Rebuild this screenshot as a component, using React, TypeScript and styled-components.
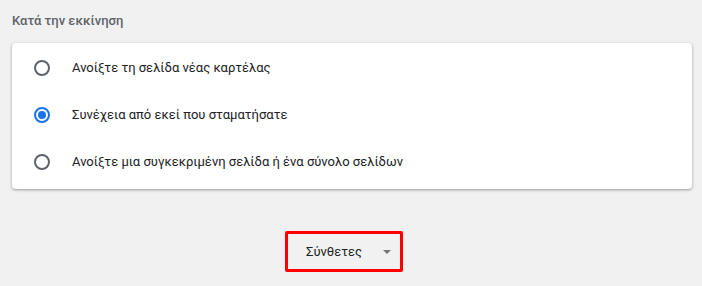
import styled, { createGlobalStyle } from "styled-components";
import { useState } from "react";

const GlobalStyle = createGlobalStyle`
  body {
    margin: 0;
    background: #f1f1f1;
    font-family: Roboto, "Noto Sans", sans-serif;
  }
`;

const Page = styled.div`
  width: 702px;
  height: 286px;
  padding: 12px 10px 0 12px;
  box-sizing: border-box;
  display: flex;
  flex-direction: column;
`;

const Title = styled.h2`
  margin: 0 0 14px;
  font-size: 13px;
  line-height: 17px;
  font-weight: 500;
  color: #5f6368;
`;

const Card = styled.div`
  width: 680px;
  background: #fff;
  border-radius: 4px;
  padding: 1px 0 4px;
  box-shadow: 0 1px 2px rgba(60, 64, 67, 0.3), 0 1px 3px 1px rgba(60, 64, 67, 0.15);
`;

const Row = styled.label`
  height: 47px;
  display: flex;
  align-items: center;
  gap: 22px;
  padding-left: 22px;
  cursor: pointer;
  font-size: 13px;
  color: #202124;
`;

const Radio = styled.span<{ $checked: boolean }>`
  width: 16px;
  height: 16px;
  box-sizing: border-box;
  border-radius: 50%;
  border: 2px solid ${(p) => (p.$checked ? "#1a73e8" : "#5f6368")};
  display: flex;
  align-items: center;
  justify-content: center;

  &::after {
    content: "";
    width: 8px;
    height: 8px;
    border-radius: 50%;
    background: ${(p) => (p.$checked ? "#1a73e8" : "transparent")};
  }
`;

const Footer = styled.div`
  display: flex;
  padding: 42px 0 0 273px;
`;

const AdvancedButton = styled.button`
  width: 118px;
  height: 41px;
  box-sizing: border-box;
  border: 3px solid #ff0000;
  border-radius: 2px;
  background: transparent;
  display: flex;
  align-items: center;
  padding: 0 0 0 18px;
  font-family: inherit;
  font-size: 13px;
  color: #202124;
  cursor: pointer;
`;

const Arrow = styled.span`
  margin-left: auto;
  margin-right: 9px;
  width: 0;
  height: 0;
  border-left: 4px solid transparent;
  border-right: 4px solid transparent;
  border-top: 4px solid #757575;
`;

const options = [
  "Ανοίξτε τη σελίδα νέας καρτέλας",
  "Συνέχεια από εκεί που σταματήσατε",
  "Ανοίξτε μια συγκεκριμένη σελίδα ή ένα σύνολο σελίδων",
];

export default function App() {
  const [selected, setSelected] = useState(1);

  return (
    <Page>
      <GlobalStyle />
      <Title>Κατά την εκκίνηση</Title>
      <Card>
        {options.map((text, idx) => (
          <Row key={text} onClick={() => setSelected(idx)}>
            <Radio $checked={selected === idx} />
            {text}
          </Row>
        ))}
      </Card>
      <Footer>
        <AdvancedButton>
          Σύνθετες
          <Arrow />
        </AdvancedButton>
      </Footer>
    </Page>
  );
}
